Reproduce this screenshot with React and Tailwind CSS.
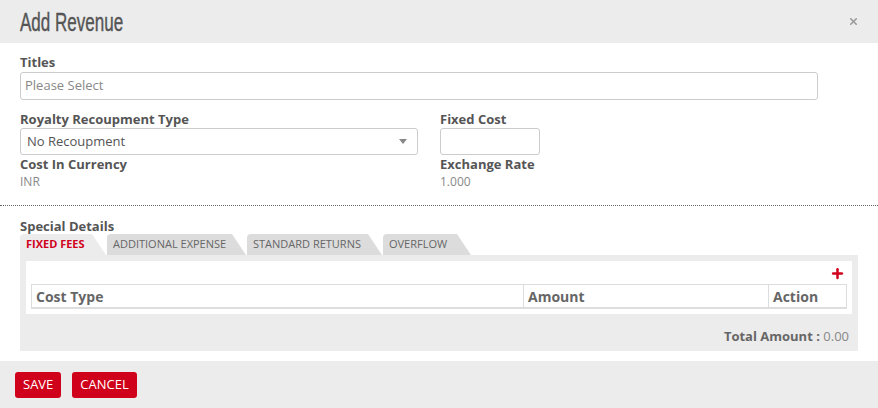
import { Plus, X } from "lucide-react"

const tabs = [
  { label: "FIXED FEES", w: "w-[86px]", active: true },
  { label: "ADDITIONAL EXPENSE", w: "w-[139px]" },
  { label: "STANDARD RETURNS", w: "w-[135px]" },
  { label: "OVERFLOW", w: "w-[88px]" },
]

const Label = ({ children }) => (
  <div className="text-[13px] font-bold leading-[16px] text-[#555]">{children}</div>
)

export default function App() {
  return (
    <div className="w-[878px] h-[408px] bg-white flex flex-col text-[#555]" style={{ fontFamily: "'Open Sans', sans-serif" }}>
      {/* Header */}
      <div className="h-[43px] shrink-0 bg-[#ececec] flex items-center justify-between pl-[20px] pr-[19px]">
        <h1
          className="text-[26px] leading-none text-[#555] origin-left scale-x-[0.655] whitespace-nowrap [-webkit-text-stroke:0.4px_#555]"
          style={{ fontFamily: "'Liberation Sans', sans-serif" }}
        >
          Add Revenue
        </h1>
        <X className="w-[11px] h-[11px] text-[#9a9a9a]" strokeWidth={3.5} />
      </div>

      {/* Body */}
      <div className="h-[318px] shrink-0 flex flex-col">
        <div className="px-[20px] pt-[11px]">
          <Label>Titles</Label>
          <div className="mt-[2px] w-[798px] h-[28px] border border-[#ccc] rounded-[3px] flex items-center px-[4px] text-[13px] text-[#888]">
            Please Select
          </div>

          <div className="flex mt-[11px]">
            <div className="w-[420px]">
              <Label>Royalty Recoupment Type</Label>
              <div className="mt-[1px] w-[398px] h-[27px] border border-[#ccc] rounded-[3px] flex items-center justify-between pl-[6px] pr-[10px] text-[13px] text-[#555]">
                <span>No Recoupment</span>
                <span className="w-0 h-0 border-l-[4px] border-r-[4px] border-t-[5px] border-l-transparent border-r-transparent border-t-[#888]" />
              </div>
              <div className="mt-[1px]">
                <Label>Cost In Currency</Label>
              </div>
              <div className="mt-[1px] text-[12px] leading-[18px] text-[#888]">INR</div>
            </div>
            <div>
              <Label>Fixed Cost</Label>
              <div className="mt-[1px] w-[100px] h-[27px] border border-[#ccc] rounded-[3px]" />
              <div className="mt-[1px]">
                <Label>Exchange Rate</Label>
              </div>
              <div className="mt-[1px] text-[12px] leading-[18px] text-[#888]">1.000</div>
            </div>
          </div>
        </div>

        <div className="mt-[14px] border-t border-dotted border-[#666]" />

        <div className="px-[20px] pt-[12px]">
          <Label>Special Details</Label>
          <div className="flex gap-[1px] h-[21px]">
            {tabs.map((t) => (
              <div
                key={t.label}
                className={`${t.w} h-[21px] rounded-tl-[4px] flex items-center pl-[6px] text-[11px] [clip-path:polygon(0_0,calc(100%-14px)_0,100%_100%,0_100%)] ${
                  t.active ? "bg-[#ececec] text-[#d0021b] font-bold" : "bg-[#dcdcdc] text-[#666]"
                }`}
              >
                {t.label}
              </div>
            ))}
          </div>
          <div className="h-[96px] bg-[#ececec] px-[6px] pt-[6px]">
            <div className="h-[53px] bg-white px-[5px] pt-[6px]">
              <div className="flex justify-end pr-[2px] h-[12px] items-center">
                <Plus className="w-[15px] h-[15px] text-[#d0021b]" strokeWidth={4} />
              </div>
              <div className="mt-[5px] grid grid-cols-[491px_245px_1fr] border border-[#ddd] border-b-2 text-[14px] font-bold text-[#666] h-[25px]">
                <div className="px-[4px] flex items-center">Cost Type</div>
                <div className="px-[4px] flex items-center border-l border-[#ddd]">Amount</div>
                <div className="px-[4px] flex items-center border-l border-[#ddd]">Action</div>
              </div>
            </div>
            <div className="mt-[13px] text-right pr-[3px] text-[13px] leading-[18px]">
              <span className="font-bold text-[#666]">Total Amount : </span>
              <span className="text-[#888]">0.00</span>
            </div>
          </div>
        </div>
      </div>

      {/* Footer */}
      <div className="flex-1 bg-[#ececec] flex items-center gap-[11px] px-[15px]">
        <button className="h-[26px] px-[8px] bg-[#d0021b] text-white text-[13px] rounded-[3px]">SAVE</button>
        <button className="h-[26px] px-[8px] bg-[#d0021b] text-white text-[13px] rounded-[3px]">CANCEL</button>
      </div>
    </div>
  )
}
